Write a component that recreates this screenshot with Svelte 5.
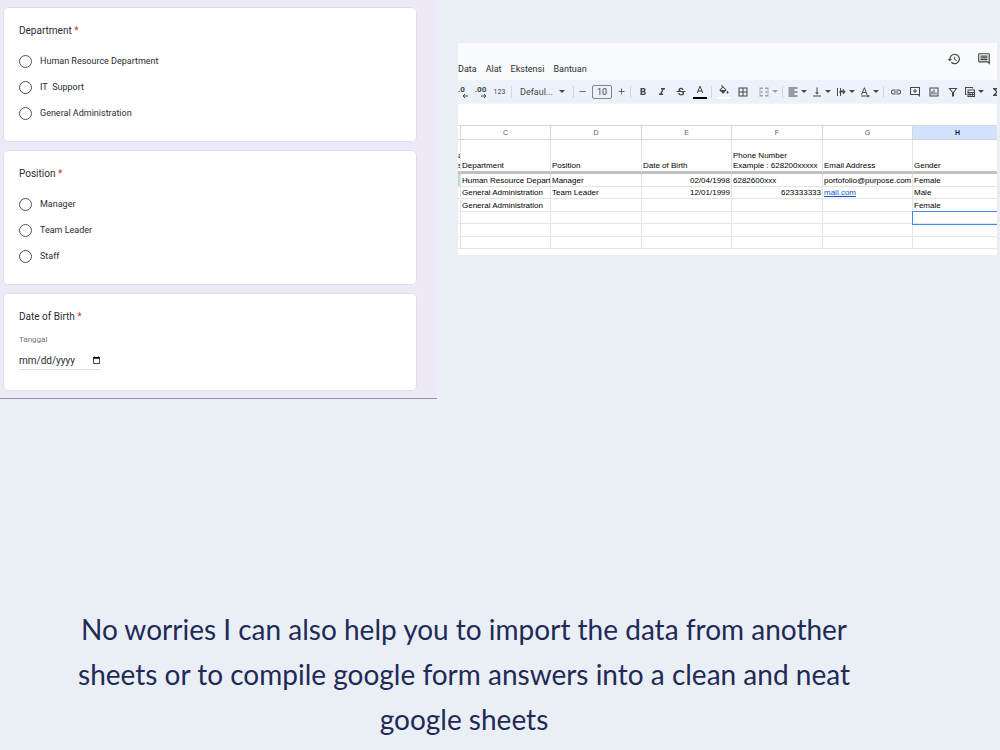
<script>
  const questions = [
    {
      id: 'department',
      title: 'Department',
      options: ['Human Resource Department', 'IT\u00a0 Support', 'General Administration']
    },
    { id: 'position', title: 'Position', options: ['Manager', 'Team Leader', 'Staff'] }
  ];

  const menus = ['Data', 'Alat', 'Ekstensi', 'Bantuan'];
  const columns = ['', 'C', 'D', 'E', 'F', 'G', 'H'];

  const rows = [
    ['Human Resource Depart', 'Manager', '02/04/1998', '6282600xxx', 'portofolio@purpose.com', 'Female'],
    ['General Administration', 'Team Leader', '12/01/1999', '623333333', 'mail.com', 'Male'],
    ['General Administration', '', '', '', '', 'Female'],
    ['', '', '', '', '', ''],
    ['', '', '', '', '', ''],
    ['', '', '', '', '', '']
  ];

  const icons = {
    history:
      'M13 3a9 9 0 0 0-9 9H1l3.9 3.9.1.1L9 12H6a7 7 0 1 1 2.1 4.9l-1.4 1.4A9 9 0 1 0 13 3zm-1 5v5l4.3 2.5.7-1.2-3.5-2.1V8z',
    comments:
      'M22 4a2 2 0 0 0-2-2H4a2 2 0 0 0-2 2v12c0 1.100.9 2 2 2h14l4 4zm-2 13.200L18.800 16H4V4h16zM6 12h12v2H6zm0-3h12v2H6zm0-3h12v2H6z',
    bold:
      'M15.600 10.800c1-.7 1.600-1.800 1.600-2.800 0-2.300-1.700-4-4-4H7v14h7c2.100 0 3.700-1.700 3.700-3.800 0-1.500-.9-2.800-2.100-3.400zM10 6.500h3a1.500 1.500 0 0 1 0 3h-3zm3.500 9H10v-3h3.500a1.500 1.500 0 0 1 0 3z',
    italic: 'M10 4v3h2.200l-3.400 8H6v3h8v-3h-2.200l3.400-8H18V4z',
    strike:
      'M7.200 9.800C6 7.500 7.400 3.500 12 3.500c3 0 5 1.700 5 4.300h-2.800c0-1.200-.8-2-2.200-2-2.600 0-2.700 2-1.500 2.800.7.500 1.300.8 2 1.200zM21 12v-2H3v2h9.600c2.100.8 2.600 1.500 2.600 2.600 0 1.300-1.200 2.100-2.900 2.100-1.800 0-3.100-.8-3.100-2.600H6.400c0 3.200 2.700 4.900 5.900 4.900 3.400 0 5.900-1.700 5.900-4.500 0-.9-.2-1.800-.7-2.500H21z',
    textColor: 'M11 2 5.500 16h2.300l1.100-3h6.200l1.100 3h2.300L13 2zm-1.400 9L12 4.700l2.400 6.300z',
    fill:
      'M16.600 8.900 7.600 0 6.200 1.400l2.400 2.400-5.200 5.100c-.5.600-.5 1.600 0 2.200l5.500 5.500c.6.500 1.600.5 2.200 0l5.500-5.500c.5-.6.500-1.600 0-2.200zM5.200 10 10 5.200l4.800 4.800zM19 11.500s-2 2.200-2 3.500a2 2 0 0 0 4 0c0-1.300-2-3.500-2-3.500z',
    borders: 'M3 3v18h18V3zm8 16H5v-6h6zm0-8H5V5h6zm8 8h-6v-6h6zm0-8h-6V5h6z',
    merge:
      'M3 3h7v3H5v3H3zM14 3h7v6h-2V6h-5zM3 15h2v3h5v3H3zM19 15h2v6h-7v-3h5zM2 11h5V9l3 3-3 3v-2H2zM22 11h-5V9l-3 3 3 3v-2h5z',
    align: 'M3 3h18v2H3zm0 4h12v2H3zm0 4h18v2H3zm0 4h12v2H3zm0 4h18v2H3z',
    valign: 'M16 13h-3V3h-2v10H8l4 4zM4 19v2h16v-2z',
    overflow: 'M4 4h2v16H4zM10 4h2v5h5l-2-2 1.400-1.400L21 12l-4.600 4.400L15 15l2-2h-5v7h-2v-7H8v-2h2z',
    rotate: 'M10 3 4 17h2.200l1.200-3h6.200l1.200 3H17L11.500 3zM8.200 12l2.500-6.500 2.300 6.500zM22 20l-5-3v2H4v2h13v2z',
    link:
      'M3.900 12A3.100 3.100 0 0 1 7 8.900h4V7H7a5 5 0 0 0 0 10h4v-1.900H7A3.100 3.100 0 0 1 3.900 12zM8 13h8v-2H8zm9-6h-4v1.900h4a3.100 3.100 0 0 1 0 6.200h-4V17h4a5 5 0 0 0 0-10z',
    addComment: 'M22 2H2v16h16l4 4zm-2 15-1-1H4V4h16zM11 14h2v-3h3V9h-3V6h-2v3H8v2h3z',
    chart: 'M3 3v18h18V3zm16 16H5V5h14zM7 10h2v7H7zm4-3h2v10h-2zm4 6h2v4h-2z',
    filter: 'M3 4l7 9v8h4v-8l7-9zm4 2h10l-5 6.500z',
    tableView:
      'M7 7v15h15V7zm2 2h11v3H9zm0 5h2v2H9zm4 0h3v2h-3zm5 0h2v2h-2zm-9 4h2v2H9zm4 0h3v2h-3zm5 0h2v2h-2zM2 2h16v3h-2V4H4v12h1v2H2z',
    functions: 'M18 4H6v2l6.500 6L6 18v2h12v-3h-7l5-5-5-5h7z',
    minus: 'M4 11h16v2H4z',
    plus: 'M20 13h-7v7h-2v-7H4v-2h7V4h2v7h7z'
  };

  let selected = $state({ row: 3, col: 5 });

  function align(col, value) {
    return col === 2 || (col === 3 && /^\d+$/.test(value)) ? 'right' : '';
  }
</script>

{#snippet icon(name)}
  <svg class="icon" viewBox="0 0 24 24" aria-hidden="true"><path d={icons[name]} /></svg>
{/snippet}

{#snippet caret()}
  <svg class="caret" viewBox="0 0 6 3" aria-hidden="true"><path d="M0 0h6L3 3z" /></svg>
{/snippet}

{#snippet tool(name, label)}
  <button class="tool" aria-label={label}>{@render icon(name)}</button>
{/snippet}

{#snippet drop(name, label)}
  <button class="tool drop" aria-label={label}>{@render icon(name)}{@render caret()}</button>
{/snippet}

<main class="page">
  <div class="shots">
    <form class="form">
      {#each questions as question}
        <fieldset class="card">
          <legend>{question.title} <span class="required">*</span></legend>
          {#each question.options as option}
            <label class="option">
              <input type="radio" name={question.id} value={option} />
              {option}
            </label>
          {/each}
        </fieldset>
      {/each}
      <fieldset class="card">
        <legend>Date of Birth <span class="required">*</span></legend>
        <label class="date-label" for="birth">Tanggal</label>
        <input class="date" id="birth" type="date" />
      </fieldset>
    </form>

    <section class="sheet">
      <header class="top">
        <nav class="menus">
          {#each menus as menu}
            <button>{menu}</button>
          {/each}
        </nav>
        <div class="actions">
          <button aria-label="History">{@render icon('history')}</button>
          <button aria-label="Comments">{@render icon('comments')}</button>
        </div>
      </header>

      <div class="toolbar">
        <button class="tool decimal first" aria-label="Decrease decimals">
          .0
          <svg class="arrow" viewBox="0 0 6 4" aria-hidden="true"><path d="M6 2H1M3 0 1 2l2 2" /></svg>
        </button>
        <button class="tool decimal" aria-label="Increase decimals">
          .00
          <svg class="arrow" viewBox="0 0 6 4" aria-hidden="true"><path d="M0 2h5M3 0l2 2-2 2" /></svg>
        </button>
        <button class="tool number">123</button>
        <span class="sep"></span>
        <div class="font">
          <select aria-label="Font"><option>Defaul...</option></select>
          {@render caret()}
        </div>
        <span class="sep"></span>
        <button class="tool step" aria-label="Smaller">{@render icon('minus')}</button>
        <input class="size" aria-label="Font size" value="10" />
        <button class="tool step" aria-label="Larger">{@render icon('plus')}</button>
        <span class="sep"></span>
        {@render tool('bold', 'Bold')}
        {@render tool('italic', 'Italic')}
        {@render tool('strike', 'Strikethrough')}
        <button class="tool colour" aria-label="Text colour">{@render icon('textColor')}</button>
        <span class="sep"></span>
        <button class="tool colour light" aria-label="Fill colour">{@render icon('fill')}</button>
        {@render tool('borders', 'Borders')}
        <button class="tool drop merge" aria-label="Merge cells" disabled>
          {@render icon('merge')}{@render caret()}
        </button>
        <span class="sep"></span>
        {@render drop('align', 'Horizontal align')}
        {@render drop('valign', 'Vertical align')}
        {@render drop('overflow', 'Text wrapping')}
        {@render drop('rotate', 'Text rotation')}
        <span class="sep"></span>
        {@render tool('link', 'Insert link')}
        {@render tool('addComment', 'Insert comment')}
        {@render tool('chart', 'Insert chart')}
        {@render tool('filter', 'Create a filter')}
        {@render drop('tableView', 'Table views')}
        {@render tool('functions', 'Functions')}
      </div>

      <div class="grid">
        <table>
          <colgroup>
            <col class="edge" />
            <col class="even" />
            <col class="odd" />
            <col class="even" />
            <col class="odd" />
            <col class="even" />
            <col />
          </colgroup>
          <thead>
            <tr class="letters">
              {#each columns as letter, i}
                <th class:current={i === selected.col + 1}>{letter}</th>
              {/each}
            </tr>
            <tr class="titles">
              <th class="cut">a<br />s</th>
              <th>Department</th>
              <th>Position</th>
              <th>Date of Birth</th>
              <th>Phone Number<br />Example : 628200xxxxx</th>
              <th>Email Address</th>
              <th>Gender</th>
            </tr>
          </thead>
          <tbody>
            {#each rows as row, r}
              <tr>
                <td class:marked={r === 0}></td>
                {#each row as value, c}
                  <td
                    class={align(c, value)}
                    class:selected={r === selected.row && c === selected.col}
                    onclick={() => (selected = { row: r, col: c })}
                  >
                    {#if value === 'mail.com'}
                      <a href="#mail">{value}</a>
                    {:else}
                      {value}
                    {/if}
                  </td>
                {/each}
              </tr>
            {/each}
          </tbody>
        </table>
      </div>
    </section>
  </div>

  <p class="caption">
    No worries I can also help you to import the data from another sheets or to compile google form
    answers into a clean and neat google sheets
  </p>
</main>

<style>
  :global(body) {
    margin: 0;
    background: #eaeff6;
  }
  .page,
  .page * {
    box-sizing: border-box;
  }
  .page {
    min-height: 100vh;
    display: flex;
    flex-direction: column;
    justify-content: space-between;
    overflow: hidden;
    font-family: Roboto, sans-serif;
    color: #2b2c30;
  }
  button,
  input,
  select {
    margin: 0;
    padding: 0;
    border: 0;
    background: none;
    font: inherit;
    color: inherit;
  }
  .shots {
    display: grid;
    grid-template-columns: 437fr 563fr;
    align-items: start;
  }

  /* form */
  .form {
    display: flex;
    flex-direction: column;
    gap: 8px;
    padding: 7px 20px 7px 3px;
    background: #ede9f6;
    border-bottom: 1px solid #98949f;
  }
  .card {
    min-width: 0;
    margin: 0;
    padding: 13px 15px 15px;
    background: #fff;
    border: 1px solid #e2dee9;
    border-radius: 5px;
  }
  legend {
    float: left;
    width: 100%;
    padding: 0;
    margin-bottom: 7px;
    font-size: 10px;
    line-height: 20px;
  }
  .required {
    color: #d93025;
  }
  .option {
    clear: both;
    display: flex;
    align-items: center;
    gap: 8px;
    height: 26px;
    font-size: 9px;
  }
  .option input {
    appearance: none;
    width: 13px;
    height: 13px;
    border: 1px solid #50545a;
    border-radius: 50%;
  }
  .option input:checked {
    background: #673ab7;
  }
  .date-label {
    clear: both;
    display: block;
    font-size: 8px;
    line-height: 12px;
    color: #70757a;
  }
  .date {
    display: block;
    width: 82px;
    height: 18px;
    margin: 6px 0 5px;
    border-bottom: 1px solid #dadce0;
    font-size: 10px;
  }
  .date::-webkit-datetime-edit-fields-wrapper,
  .date::-webkit-datetime-edit-text,
  .date::-webkit-datetime-edit-month-field,
  .date::-webkit-datetime-edit-day-field,
  .date::-webkit-datetime-edit-year-field {
    padding: 0;
  }
  .date::-webkit-calendar-picker-indicator {
    width: 9px;
    height: 9px;
    padding: 0;
    background-size: 9px;
  }

  /* spreadsheet */
  .sheet {
    min-width: 0;
    margin: 43px 3px 0 21px;
    background: #fff;
    overflow: hidden;
  }
  .icon {
    width: 12px;
    height: 12px;
    flex: none;
    fill: #444746;
  }
  .caret {
    width: 6px;
    height: 3px;
    flex: none;
    fill: #444746;
  }
  .top {
    display: flex;
    justify-content: space-between;
    height: 37px;
    padding-right: 6px;
    background: #f9fbfd;
  }
  .menus {
    display: flex;
    align-items: flex-end;
    gap: 9px;
    padding-bottom: 5px;
    font-size: 9px;
    line-height: 12px;
  }
  .actions {
    display: flex;
    gap: 16px;
    padding-top: 8px;
  }
  .actions button {
    height: 14px;
  }
  .actions .icon {
    width: 14px;
    height: 14px;
  }
  .toolbar {
    display: flex;
    align-items: center;
    height: 24px;
    background: #ecf1fa;
    border-bottom: 1px solid #f2f5fb;
    color: #444746;
    font-size: 9px;
  }
  .tool {
    flex: none;
    display: flex;
    align-items: center;
    justify-content: center;
    width: 19px;
    height: 18px;
  }
  .decimal {
    flex-direction: column;
    align-items: center;
    font-size: 8px;
    font-weight: 700;
    line-height: 8px;
  }
  .first {
    margin-left: -6px;
  }
  .arrow {
    width: 6px;
    height: 4px;
    margin-left: 6px;
    fill: none;
    stroke: #444746;
  }
  .number {
    font-size: 7px;
  }
  .sep {
    flex: none;
    width: 1px;
    height: 12px;
    margin: 0 2px;
    background: #d3d8e0;
  }
  .font {
    flex: none;
    display: flex;
    align-items: center;
    width: 57px;
    padding: 0 6px;
  }
  .font select {
    appearance: none;
    flex: 1;
    min-width: 0;
  }
  .step {
    width: 13px;
  }
  .step .icon {
    width: 9px;
    height: 9px;
  }
  .size {
    flex: none;
    width: 20px;
    height: 14px;
    margin: 0 3px;
    border: 1px solid #80868b;
    border-radius: 2px;
    text-align: center;
  }
  .colour {
    flex-direction: column;
  }
  .colour::after {
    content: '';
    width: 14px;
    height: 2px;
    background: #000;
  }
  .light::after {
    background: #fff;
  }
  .drop {
    width: 24px;
    gap: 2px;
  }
  .merge {
    margin-left: 4px;
    opacity: 0.45;
  }

  .grid {
    height: 151px;
    padding-top: 21px;
    overflow: hidden;
  }
  table {
    width: calc(100% + 6px);
    table-layout: fixed;
    border-collapse: separate;
    border-spacing: 0;
    font: 8px/10px 'Liberation Sans', Arial, sans-serif;
    color: #000;
  }
  .edge {
    width: 3px;
  }
  .even {
    width: 90px;
  }
  .odd {
    width: 91px;
  }
  th,
  td {
    height: 12px;
    padding: 0 1px;
    border-right: 1px solid #e4e5e6;
    border-bottom: 1px solid #e4e5e6;
    overflow: hidden;
    white-space: nowrap;
    text-align: left;
    vertical-align: bottom;
    font-weight: 400;
  }
  tbody tr:nth-child(odd) td {
    height: 13px;
  }
  .letters th {
    height: 15px;
    border-top: 1px solid #d5d7da;
    border-color: #d5d7da;
    text-align: center;
    vertical-align: middle;
    font-size: 7px;
    color: #575b5f;
  }
  .letters .current {
    background: #d3e3fd;
    color: #041e49;
    font-weight: 700;
  }
  .titles th {
    height: 34px;
    border-bottom: 3px solid #c0c0c0;
  }
  .titles .cut {
    padding: 0;
  }
  .marked {
    background: #b7dfc5;
  }
  .right {
    text-align: right;
  }
  .selected {
    outline: 1px solid #4285f4;
  }
  td a {
    color: #1155cc;
  }

  .caption {
    margin: 0;
    padding: 0 136px 8px 64px;
    font: 28px/45px Lato, sans-serif;
    text-align: center;
    color: #1f2b56;
  }
</style>
